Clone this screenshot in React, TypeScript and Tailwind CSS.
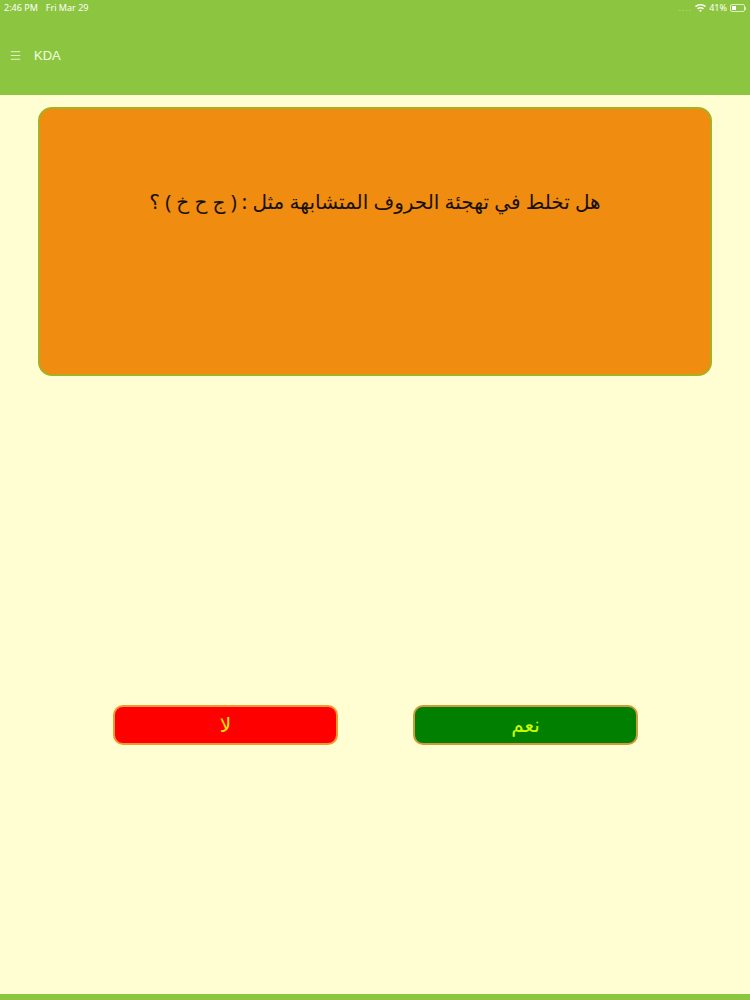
import { Menu } from "lucide-react";

function StatusBar() {
  return (
    <div className="flex h-[16px] items-center justify-between px-[4px] text-[9px] text-white">
      <div className="flex gap-[8px]">
        <span>2:46 PM</span>
        <span>Fri Mar 29</span>
      </div>
      <div className="flex items-center gap-[3px]">
        <span className="tracking-[1px] text-white/40">....</span>
        <svg width="11" height="8" viewBox="0 0 11 8" fill="white">
          <path d="M5.5 0C3.4 0 1.5.8 0 2.1l1 1.1C2.2 2.2 3.8 1.5 5.5 1.5s3.3.7 4.5 1.7l1-1.1C9.5.8 7.6 0 5.5 0z" />
          <path d="M5.5 3C4.2 3 3 3.5 2.1 4.3l1 1.1c.6-.6 1.5-.9 2.4-.9s1.8.3 2.4.9l1-1.1C8 3.5 6.8 3 5.5 3z" />
          <path d="M5.5 6c-.6 0-1.1.2-1.4.6L5.5 8l1.4-1.4C6.6 6.2 6.1 6 5.5 6z" />
        </svg>
        <span>41%</span>
        <div className="flex items-center">
          <div className="h-[8px] w-[15px] rounded-[2px] border border-white/70 p-[1px]">
            <div className="h-full w-[40%] bg-white" />
          </div>
          <div className="h-[3px] w-[1px] bg-white/70" />
        </div>
      </div>
    </div>
  );
}

export default function App() {
  return (
    <div
      className="flex h-[1000px] w-[750px] flex-col bg-[#fffdd2]"
      style={{ fontFamily: '"Noto Sans", "DejaVu Sans", sans-serif' }}
    >
      <header className="h-[95px] bg-[#8cc640]">
        <StatusBar />
        <div className="mt-[30px] flex items-center gap-[12px] pl-[9px] text-[13px] text-[#f4ffe0]">
          <Menu className="h-[13px] w-[13px]" strokeWidth={1.5} />
          <span style={{ fontFamily: '"Liberation Sans", sans-serif' }}>KDA</span>
        </div>
      </header>

      <main className="flex flex-1 flex-col items-center">
        <div className="mt-[12px] h-[269px] w-[674px] rounded-[14px] border-2 border-[#a8b023] bg-[#f08c0f] pt-[78px] text-center">
          <p dir="rtl" className="text-[20px] text-[#1a1208]">
            هل تخلط في تهجئة الحروف المتشابهة مثل : ( ج ح خ ) ؟
          </p>
        </div>

        <div className="mt-[329px] flex w-full justify-center gap-[75px] pl-[1px]">
          <button className="h-[40px] w-[225px] rounded-[10px] border-2 border-[#f29a2e] bg-[#ff0000] text-[20px] leading-none text-[#ffe600]">
            لا
          </button>
          <button className="h-[40px] w-[225px] rounded-[10px] border-2 border-[#d19a3c] bg-[#007f00] text-[20px] leading-none text-[#ccff00]">
            نعم
          </button>
        </div>
      </main>

      <footer className="h-[6px] bg-[#8cc640]" />
    </div>
  );
}
